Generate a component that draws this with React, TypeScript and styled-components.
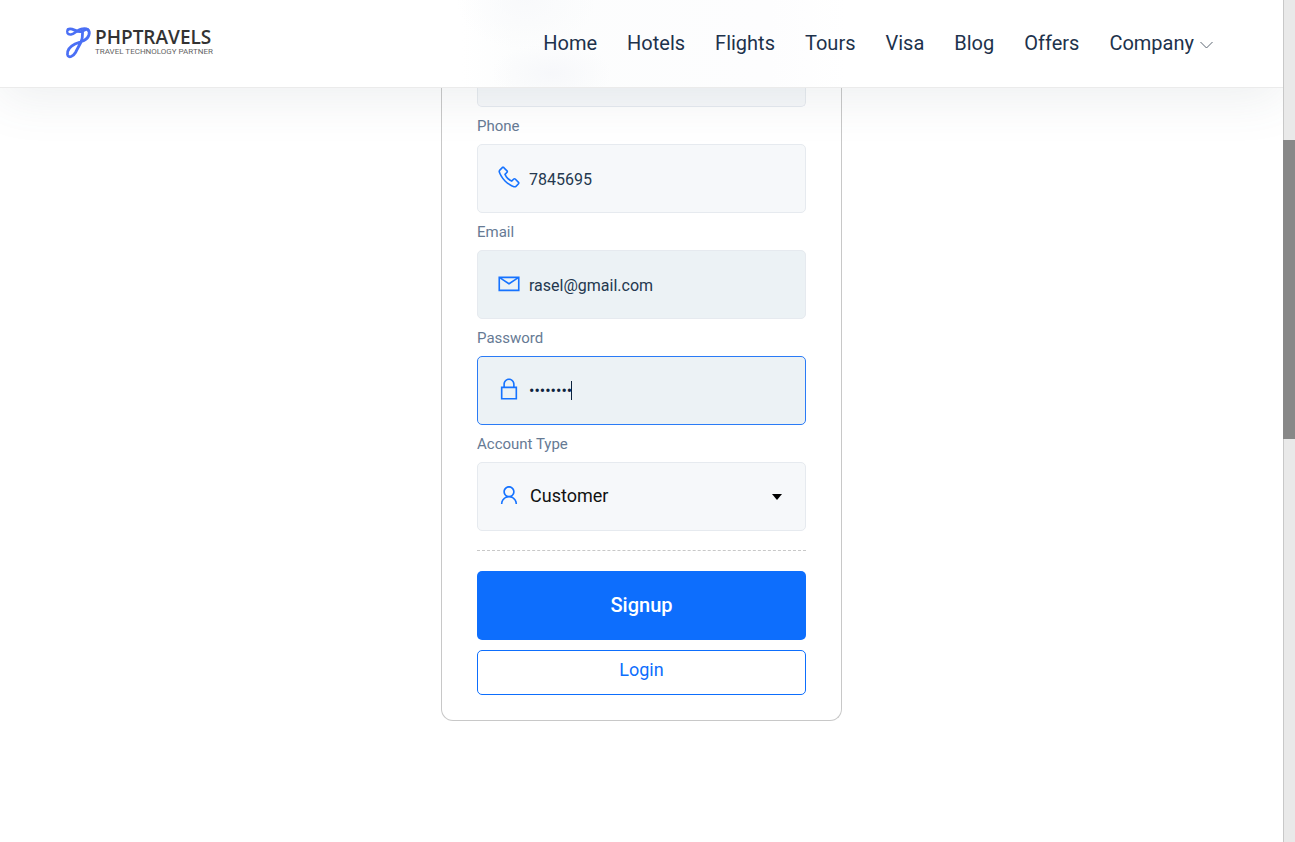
import React, { useState } from 'react';
import styled, { createGlobalStyle } from 'styled-components';
import { LiaPhoneSolid, LiaEnvelope, LiaLockSolid, LiaUser } from 'react-icons/lia';

const GlobalStyle = createGlobalStyle`
  *, *::before, *::after { box-sizing: border-box; }
  body {
    margin: 0;
    background: #fff;
    color: #0d233e;
    font-family: Roboto, "Liberation Sans", sans-serif;
  }
  button, input, select { font-family: inherit; }
`;

const Page = styled.div`
  display: flex;
  min-height: 100vh;
`;

const Content = styled.div`
  flex: 1;
  min-width: 0;
  overflow: hidden;
`;

const Header = styled.header`
  position: relative;
  z-index: 2;
  display: flex;
  align-items: center;
  justify-content: space-between;
  height: 88px;
  padding: 0 70px 2px 64px;
  border-bottom: 1px solid #ebebeb;
  background:
    radial-gradient(ellipse 60px 30px at 43% 84%, rgba(246, 247, 250, 0.9), transparent),
    radial-gradient(ellipse 70px 50px at 41% 0%, rgba(248, 249, 251, 0.9), transparent),
    linear-gradient(90deg, #fff 36%, #fcfdfd 40%, #fdfdfe 60%, #fff 66%);
  box-shadow: 0 10px 50px rgba(82, 95, 105, 0.1);
`;

const Logo = styled.a`
  display: flex;
  align-items: center;
  gap: 3px;
  color: #333;
  text-decoration: none;
`;

const LogoText = styled.span`
  display: flex;
  flex-direction: column;
`;

const LogoName = styled.span`
  font-family: "Open Sans", sans-serif;
  font-size: 19px;
  font-weight: 600;
  line-height: 18px;
`;

const LogoTagline = styled.span`
  color: #666;
  font-size: 8px;
  line-height: 12px;
`;

const Nav = styled.nav`
  display: flex;
  align-items: center;
  gap: 30px;
`;

const NavLink = styled.a`
  display: flex;
  align-items: center;
  gap: 6px;
  color: #1d324c;
  font-size: 20px;
  line-height: 30px;
  text-decoration: none;
`;

const Card = styled.form`
  width: 401px;
  max-width: 100%;
  margin: 0 auto;
  padding: 0 35px 25px;
  border: 1px solid #c8c8c8;
  border-top: 0;
  border-radius: 0 0 12px 12px;
`;

const Label = styled.label`
  display: block;
  padding-top: 1px;
  color: #667a94;
  font-size: 15px;
  line-height: 36px;
`;

const Field = styled.div<{ $filled?: boolean; $focused?: boolean }>`
  display: flex;
  align-items: center;
  gap: 7px;
  height: 69px;
  padding: 0 17px 0 18px;
  border: 1px solid ${(p) => (p.$focused ? '#2a7bf6' : '#e6eaef')};
  border-radius: 5px;
  background: ${(p) => (p.$filled ? '#ecf2f5' : '#f6f8fa')};

  > svg {
    flex: none;
    margin-bottom: 4px;
    color: #1673ff;
  }
`;

const PartialInput = styled.input`
  display: block;
  width: 100%;
  height: 19px;
  padding: 0 51px;
  border: 1px solid #e6eaef;
  border-top: 0;
  border-radius: 0 0 5px 5px;
  background: #f6f8fa;
  outline: none;
`;

const Input = styled.input<{ $hug?: boolean }>`
  flex: ${(p) => (p.$hug ? 'none' : '1')};
  field-sizing: ${(p) => (p.$hug ? 'content' : 'fixed')};
  min-width: 0;
  padding: ${(p) => (p.$hug ? '0' : '2px 0 0')};
  border: 0;
  background: transparent;
  color: ${(p) => (p.$hug ? '#0d233e' : '#24384f')};
  caret-color: transparent;
  font-size: 16px;
  line-height: 24px;
  outline: none;
`;

const Caret = styled.span`
  width: 1px;
  height: 19px;
  margin-left: -8px;
  background: #0d233e;
`;

const Select = styled.select`
  flex: 1;
  min-width: 0;
  padding: 0 0 2px 1px;
  border: 0;
  appearance: none;
  background: transparent;
  color: #111;
  font-size: 18px;
  line-height: 28px;
  outline: none;
`;

const Triangle = styled.span`
  margin: 0 6px 0 0;
  border: 5px solid transparent;
  border-top: 6px solid #000;
  border-bottom: 0;
  pointer-events: none;
`;

const Divider = styled.hr`
  height: 0;
  margin: 19px 0 20px;
  border: 0;
  border-top: 1px dashed #c8c8c8;
`;

const SignupButton = styled.button`
  display: block;
  width: 100%;
  height: 69px;
  padding: 0 0 2px;
  border: 0;
  border-radius: 5px;
  background: #0d6efd;
  color: #fff;
  font-size: 20px;
  font-weight: 500;
`;

const LoginLink = styled.a`
  display: block;
  height: 45px;
  margin-top: 10px;
  border: 1px solid #0d6efd;
  border-radius: 5px;
  color: #0d6efd;
  font-size: 18px;
  line-height: 38px;
  text-align: center;
  text-decoration: none;
`;

const ScrollTrack = styled.div`
  display: flex;
  flex-direction: column;
  width: 12px;
`;

const TrackPart = styled.div<{ $grow: number }>`
  flex: ${(p) => p.$grow} 0 0;
  border-left: 1px solid #c8c8c8;
  background: #e9e9e9;
`;

const ScrollThumb = styled.div`
  flex: 299 0 0;
  background: #888;
`;

const LogoMark = () => (
  <svg width="28" height="34" viewBox="0 0 28 34" fill="none" stroke="#4a6ff5" strokeLinecap="round" strokeLinejoin="round" aria-hidden="true">
    <path d="M4 3.500C8 1 12 6.500 17 5.500C20 5 21 2.500 23.500 3.500C27 6 25 12 20 14.500C17 16 14 16.500 11 18C6 20.500 3 24 3.500 28.500C4.500 33 9.500 30 11.500 26.500C13.500 22.500 15 20 17 16C19 12 18.500 9 18.500 5" strokeWidth="2.800" />
    <path d="M4 3.500C2 6 3.500 9 7 8.500C11 8 13 4 17 3C20 2 22 2 24 3.500" strokeWidth="2.400" />
  </svg>
);

const ChevronDown = () => (
  <svg width="13" height="12" viewBox="0 0 13 12" fill="none" stroke="#5c6673" aria-hidden="true">
    <path d="M.5 5L6.500 11L12.500 5" />
  </svg>
);

const links = ['Home', 'Hotels', 'Flights', 'Tours', 'Visa', 'Blog', 'Offers'];

export default function App() {
  const [phone, setPhone] = useState('7845695');
  const [email, setEmail] = useState('rasel@gmail.com');
  const [password, setPassword] = useState('password');

  return (
    <>
      <GlobalStyle />
      <Page>
        <Content>
          <Header>
            <Logo href="#">
              <LogoMark />
              <LogoText>
                <LogoName>PHPTRAVELS</LogoName>
                <LogoTagline>TRAVEL TECHNOLOGY PARTNER</LogoTagline>
              </LogoText>
            </Logo>
            <Nav>
              {links.map((name) => (
                <NavLink key={name} href="#">{name}</NavLink>
              ))}
              <NavLink href="#">
                Company
                <ChevronDown />
              </NavLink>
            </Nav>
          </Header>

          <Card onSubmit={(e) => e.preventDefault()}>
            <PartialInput aria-label="Last name" />

            <Label htmlFor="phone">Phone</Label>
            <Field>
              <LiaPhoneSolid size={26} />
              <Input id="phone" value={phone} onChange={(e) => setPhone(e.target.value)} />
            </Field>

            <Label htmlFor="email">Email</Label>
            <Field $filled>
              <LiaEnvelope size={26} />
              <Input id="email" type="email" value={email} onChange={(e) => setEmail(e.target.value)} />
            </Field>

            <Label htmlFor="password">Password</Label>
            <Field $filled $focused>
              <LiaLockSolid size={26} />
              <Input
                id="password"
                type="password"
                $hug
                value={password}
                onChange={(e) => setPassword(e.target.value)}
              />
              <Caret />
            </Field>

            <Label htmlFor="account">Account Type</Label>
            <Field>
              <LiaUser size={26} />
              <Select id="account" defaultValue="Customer">
                <option>Customer</option>
              </Select>
              <Triangle />
            </Field>

            <Divider />
            <SignupButton type="submit">Signup</SignupButton>
            <LoginLink href="#">Login</LoginLink>
          </Card>
        </Content>
        <ScrollTrack aria-hidden="true">
          <TrackPart $grow={140} />
          <ScrollThumb />
          <TrackPart $grow={403} />
        </ScrollTrack>
      </Page>
    </>
  );
}
